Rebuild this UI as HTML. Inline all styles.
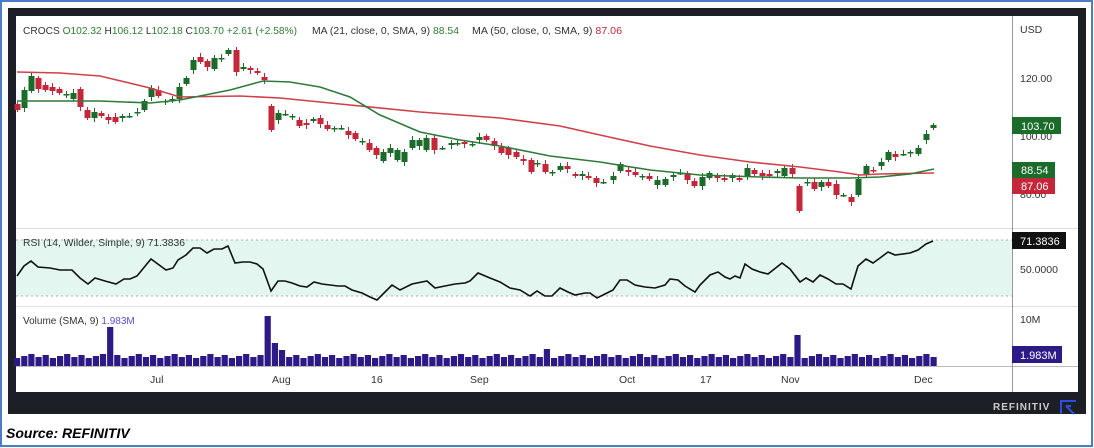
<!DOCTYPE html>
<html><head><meta charset="utf-8"><style>
html,body{margin:0;padding:0;background:#fff;}
body{width:1094px;height:448px;position:relative;overflow:hidden;font-family:"Liberation Sans",sans-serif;}
</style></head><body>
<svg id="s" width="1094" height="448" xmlns="http://www.w3.org/2000/svg" style="position:absolute;left:0;top:0">
<rect x="1" y="1" width="1091" height="445" fill="#fff" stroke="#4a7cc7" stroke-width="2"/>
<rect x="8" y="8" width="1078" height="406" fill="#1c1f26"/>
<rect x="16" y="16" width="1062" height="376" fill="#fff"/>
<rect x="16" y="240" width="996" height="56" fill="#e3f7f0"/>
<line x1="16" y1="240" x2="1012" y2="240" stroke="#aaa" stroke-dasharray="2,3"/>
<line x1="16" y1="296" x2="1012" y2="296" stroke="#aaa" stroke-dasharray="2,3"/>
<line x1="16" y1="228.5" x2="1078" y2="228.5" stroke="#ddd"/>
<line x1="16" y1="306.5" x2="1078" y2="306.5" stroke="#ddd"/>
<line x1="16" y1="366.5" x2="1078" y2="366.5" stroke="#bbb"/>
<line x1="1012.5" y1="16" x2="1012.5" y2="392" stroke="#999"/>
<g id="c"></g>
<polyline fill="none" stroke="#d0404a" stroke-width="1.6" points="17,72 60,73 100,76 150,88 180,97 240,96 280,98 340,104 420,112 500,118 560,126 600,135 650,146 700,155 750,162 800,167 840,172 860,175 880,174 934,173"/>
<polyline fill="none" stroke="#2f7a3a" stroke-width="1.6" points="17,101 100,101 150,103 180,100 230,90 263,81 290,82 320,87 350,97 380,115 420,132 460,140 500,146 550,156 600,162 650,170 700,175 760,177 800,178 850,178 880,177 910,174 934,169"/>
<polyline fill="none" stroke="#111" stroke-width="1.6" points="17,276 24,266 31,261 38,267 50,268 60,270 72,270 80,278 88,284 95,278 105,281 116,284 124,279 130,279 137,276 151,259 166,270 173,268 178,260 186,255 193,248 200,248 207,253 214,249 222,249 228,246 235,263 243,262 250,262 257,264 263,269 271,291 278,281 285,281 292,283 300,286 307,287 314,282 322,284 330,285 338,286 345,286 352,290 362,293 370,297 377,300 385,292 392,285 400,290 412,284 427,281 435,288 445,286 455,284 465,283 470,281 478,273 490,278 500,282 510,288 520,290 530,296 537,291 545,296 552,296 560,288 568,292 575,295 585,293 590,293 597,298 605,294 613,290 620,280 627,280 635,285 645,287 655,288 665,285 670,279 678,280 685,286 695,292 700,285 710,275 718,272 725,277 730,279 735,276 740,278 745,264 752,269 760,272 768,274 782,263 790,269 800,282 806,278 813,282 820,275 828,279 836,284 843,284 851,289 858,266 866,259 873,263 880,258 888,252 895,255 910,253 918,250 926,244 933,241"/>
<g id="v" fill="#2e1a87"></g>
<g font-size="10.5" fill="#333">
<text x="23" y="34" textLength="274" lengthAdjust="spacingAndGlyphs">CROCS <tspan fill="#2e7d32">O102.32</tspan> H<tspan fill="#2e7d32">106.12</tspan> L<tspan fill="#2e7d32">102.18</tspan> C<tspan fill="#2e7d32">103.70</tspan> <tspan fill="#2e7d32">+2.61 (+2.58%)</tspan></text>
<text x="312" y="34" textLength="147" lengthAdjust="spacingAndGlyphs">MA (21, close, 0, SMA, 9) <tspan fill="#2e7d32">88.54</tspan></text>
<text x="472" y="34" textLength="150" lengthAdjust="spacingAndGlyphs">MA (50, close, 0, SMA, 9) <tspan fill="#c4263a">87.06</tspan></text>
<text x="23" y="246" textLength="162" lengthAdjust="spacingAndGlyphs">RSI (14, Wilder, Simple, 9) 71.3836</text>
<text x="23" y="324" font-size="10">Volume (SMA, 9) <tspan fill="#5a4fcf">1.983M</tspan></text>
<text x="1020" y="33">USD</text>
<text x="1020" y="82">120.00</text>
<text x="1020" y="140">100.00</text>
<text x="1020" y="198">80.00</text>
<text x="1020" y="273">50.0000</text>
<text x="1020" y="323">10M</text>
<text x="150" y="383">Jul</text><text x="272" y="383">Aug</text><text x="371" y="383">16</text><text x="470" y="383">Sep</text><text x="619" y="383">Oct</text><text x="700" y="383">17</text><text x="781" y="383">Nov</text><text x="914" y="383">Dec</text>
</g>
<g font-size="11" fill="#fff">
<rect x="1012" y="117" width="49" height="17" fill="#1b6b2a"/><text x="1021" y="130">103.70</text>
<rect x="1012" y="162" width="43" height="16" fill="#1b6b2a"/><text x="1021" y="174">88.54</text>
<rect x="1012" y="178" width="43" height="16" fill="#c4263a"/><text x="1021" y="190">87.06</text>
<rect x="1012" y="232" width="54" height="17" fill="#111"/><text x="1020" y="245">71.3836</text>
<rect x="1012" y="346" width="50" height="17" fill="#2e1a87"/><text x="1020" y="359">1.983M</text>
</g>
<text x="993" y="410" font-size="10" font-weight="bold" fill="#ccc" letter-spacing="1">REFINITIV</text>
<path d="M1061,414 V401 H1076 M1066,406 L1074,414 M1066,406 H1071" fill="none" stroke="#2a4fe0" stroke-width="2"/>
<text x="6" y="438" font-size="14" font-weight="bold" font-style="italic" fill="#000">Source: REFINITIV</text>
</svg>
<script>
var d="17,104,110;24,108,90;31,91,76;38,78,89;45,85,90;52,87,91;59,89,93;66,94,94;73,99,93;80,89,107;87,110,118;94,118,112;101,113,116;108,117,120;115,117,122;122,118,116;129,116,116;137,112,112;144,110,101;151,97,88;158,90,96;165,101,101;172,101,99;179,99,87;186,84,78;193,70,60;200,57,62;207,61,67;214,69,58;221,58,58;228,54,50;236,50,72;243,69,67;250,68,70;257,71,73;264,77,80;271,106,130;278,120,113;285,114,114;292,116,116;299,120,126;306,123,125;313,121,119;320,118,124;327,125,129;334,128,128;341,128,128;348,131,135;355,133,139;362,141,141;369,143,150;376,148,155;383,161,152;390,153,148;397,160,150;404,162,152;412,148,140;419,146,140;426,150,138;434,138,150;442,148,148;451,145,143;457,144,143;464,142,144;472,145,144;479,140,137;486,136,140;494,141,146;501,147,153;508,148,155;516,152,157;523,159,161;531,160,172;537,163,163;545,164,172;552,172,172;560,170,166;567,166,169;575,174,176;582,176,174;588,176,178;596,178,183;603,182,182;613,180,176;620,171,164;628,170,172;635,172,175;642,176,176;649,176,179;657,185,180;665,185,179;673,177,175;680,173,173;687,173,180;694,181,186;702,186,177;709,178,173;717,176,178;724,178,180;732,178,175;739,178,180;747,176,168;754,170,174;762,173,176;769,174,176;777,173,171;784,176,168;792,168,174;799,186,211;807,182,182;814,182,189;821,187,182;828,182,186;836,184,195;843,195,195;851,197,202;858,195,179;866,174,166;873,170,171;881,166,162;888,160,152;895,154,157;903,154,154;910,153,152;918,154,148;926,140,134;933,128,125";
var g=document.getElementById("c"),h="";
d.split(";").forEach(function(t,i){var a=t.split(",").map(Number),x=a[0],o=a[1],c=a[2];
var col=c<o?"#1b6b2a":(c>o?"#c4263a":"#1b6b2a");var top=Math.min(o,c),bot=Math.max(o,c);
h+='<line x1="'+(x+0.5)+'" x2="'+(x+0.5)+'" y1="'+(top-2-(i%3))+'" y2="'+(bot+2+(i%2)*2)+'" stroke="'+col+'" stroke-width="1"/>';
h+='<rect x="'+(x-2.5)+'" y="'+top+'" width="6" height="'+Math.max(bot-top,1.5)+'" fill="'+col+'"/>';});
g.innerHTML=h;
var v=document.getElementById("v"),vh="";
var spikes={13:327,35:316,36:343,37:350,74:349,109:335};
for(var i=0;i<129;i++){var x=17+i*7.16;var t=358-((i*37)%5);if(spikes[i])t=spikes[i];
vh+='<rect x="'+(x-3).toFixed(1)+'" y="'+t+'" width="6.2" height="'+(366-t)+'"/>';}
v.innerHTML=vh;
</script>
</body></html>
